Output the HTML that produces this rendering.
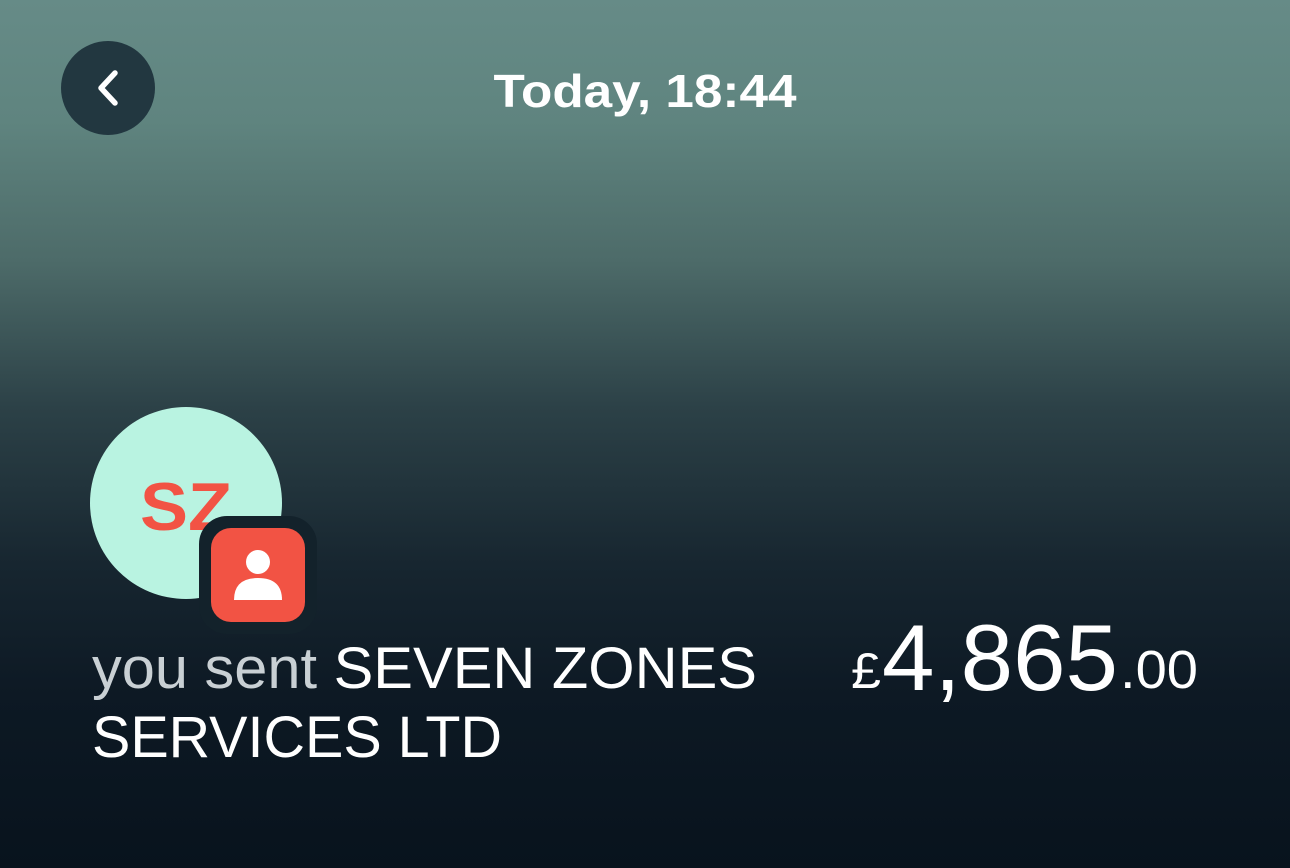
<!DOCTYPE html>
<html><head><meta charset="utf-8"><style>
html,body{margin:0;padding:0;}
body{width:1290px;height:868px;overflow:hidden;background:linear-gradient(180deg,#668b87 0%,#5f847f 14%,#4d6b69 30%,#2c4147 47%,#172630 65%,#0d1924 80%,#08131d 100%);}
svg{position:absolute;left:0;top:0;}
</style></head><body>
<svg width="1290" height="868" viewBox="0 0 1290 868" xmlns="http://www.w3.org/2000/svg">
<circle cx="108" cy="88" r="47" fill="#223740"/>
<path d="M115 73 L101 88 L115 103" fill="none" stroke="#fff" stroke-width="5.5" stroke-linecap="round" stroke-linejoin="round"/>
<text x="645" y="107" text-anchor="middle" font-family="Liberation Sans, sans-serif" font-weight="bold" font-size="46" fill="#fff" textLength="303" lengthAdjust="spacingAndGlyphs">Today, 18:44</text>
<circle cx="186" cy="503" r="96" fill="#b9f3e1"/>
<text x="186" y="530" text-anchor="middle" font-family="Liberation Sans, sans-serif" font-weight="bold" font-size="68" fill="#f25344" textLength="92" lengthAdjust="spacingAndGlyphs">SZ</text>
<rect x="199" y="516" width="118" height="118" rx="28" fill="#13222b"/>
<rect x="211" y="528" width="94" height="94" rx="20" fill="#f25344"/>
<circle cx="258" cy="562" r="12" fill="#fff"/>
<path d="M234 600 Q234 578 258 578 Q282 578 282 600 Z" fill="#fff"/>
<text x="92" y="688" font-family="Liberation Sans, sans-serif" font-size="58" textLength="665" lengthAdjust="spacingAndGlyphs"><tspan fill="#c9d0d4">you sent </tspan><tspan fill="#fff">SEVEN ZONES</tspan></text>
<text x="92" y="757" font-family="Liberation Sans, sans-serif" font-size="58" fill="#fff" textLength="410" lengthAdjust="spacingAndGlyphs">SERVICES LTD</text>
<text x="851" y="688" font-family="Liberation Sans, sans-serif" font-size="50" fill="#fff" textLength="30" lengthAdjust="spacingAndGlyphs">£</text>
<text x="882" y="690" font-family="Liberation Sans, sans-serif" font-size="94" fill="#fff" textLength="236" lengthAdjust="spacingAndGlyphs">4,865</text>
<text x="1120" y="688" font-family="Liberation Sans, sans-serif" font-size="54" fill="#fff" textLength="78" lengthAdjust="spacingAndGlyphs">.00</text>
</svg>
</body></html>
